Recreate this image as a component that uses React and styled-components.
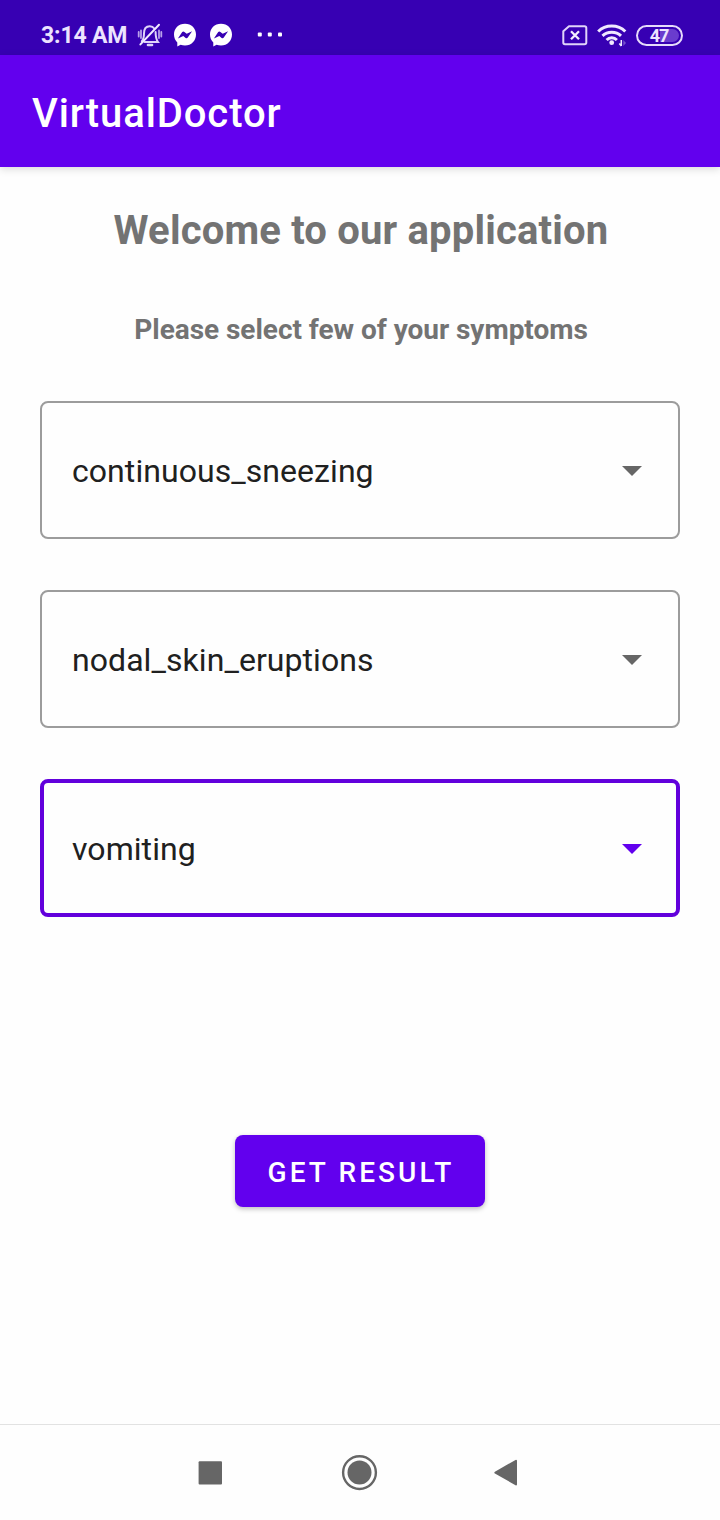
import React from "react";
import styled, { createGlobalStyle } from "styled-components";

const GlobalStyle = createGlobalStyle`
  * { box-sizing: border-box; }
  body { margin: 0; background: #fff; font-family: Roboto, sans-serif; }
`;

const Screen = styled.div`
  width: 720px;
  height: 1520px;
  display: flex;
  flex-direction: column;
  background: #fefefe;
  overflow: hidden;
`;

const StatusBar = styled.header`
  height: 55px;
  flex: none;
  padding: 15px 37px 0 41px;
  display: flex;
  justify-content: space-between;
  align-items: flex-start;
  background: #3700b3;
  color: #ece3ff;
`;

const StatusGroup = styled.div`
  height: 40px;
  display: flex;
  align-items: center;
`;

const Clock = styled.span`
  width: 96px;
  padding-top: 2px;
  font-size: 23px;
  font-weight: 700;
  line-height: 40px;
  letter-spacing: -0.15px;
  white-space: nowrap;
`;

const Glyph = styled.svg`
  display: block;
  flex: none;
  margin-right: ${(p) => p.$gap || 0}px;
`;

const Battery = styled.div`
  width: 47px;
  height: 21px;
  padding: 2px;
  border: 2px solid #e6dbfb;
  border-radius: 11px;
  display: grid;
  align-items: center;
`;

const BatteryFill = styled.span`
  grid-area: 1 / 1;
  justify-self: end;
  width: 19px;
  height: 13px;
  border-radius: 0 7px 7px 0;
  background: #6a3cce;
`;

const BatteryLevel = styled.span`
  grid-area: 1 / 1;
  justify-self: center;
  padding-right: 1px;
  font-size: 18px;
  font-weight: 700;
  line-height: 13px;
  letter-spacing: -1px;
`;

const AppBar = styled.div`
  height: 112px;
  flex: none;
  padding: 6px 32px 0;
  display: flex;
  align-items: center;
  background: #6200ee;
  box-shadow: 0 2px 8px rgba(0, 0, 0, 0.15);
`;

const AppTitle = styled.h1`
  margin: 0;
  color: #fff;
  font-size: 40px;
  font-weight: 500;
  line-height: 48px;
  letter-spacing: 0.9px;
`;

const Content = styled.main`
  flex: 1;
  padding: 40px 40px 0;
  display: flex;
  flex-direction: column;
  align-items: center;
`;

const Heading = styled.h2`
  margin: 0;
  padding-left: 2px;
  color: #737373;
  font-size: 40px;
  font-weight: 700;
  line-height: 47px;
  letter-spacing: 0.18px;
`;

const Prompt = styled.p`
  margin: 59px 0 0;
  padding-left: 2px;
  color: #737373;
  font-size: 28px;
  font-weight: 700;
  line-height: 33px;
  letter-spacing: -0.04px;
`;

const Fields = styled.div`
  width: 100%;
  margin-top: 55px;
  display: flex;
  flex-direction: column;
  gap: 51px;
`;

const Field = styled.div`
  height: 138px;
  padding: 2px ${(p) => (p.$active ? 34 : 36)}px 0 ${(p) => (p.$active ? 28 : 30)}px;
  display: flex;
  align-items: center;
  justify-content: space-between;
  border: ${(p) => (p.$active ? "4px solid #6200dc" : "2px solid #9c9c9c")};
  border-radius: 8px;
  color: ${(p) => (p.$active ? "#6200ee" : "#666")};
`;

const FieldText = styled.span`
  color: #202020;
  font-size: 32px;
  line-height: 38px;
  letter-spacing: 0.06px;
`;

const Submit = styled.button`
  width: 250px;
  height: 72px;
  margin: 218px 0 0;
  padding: 3px 0 0 2px;
  border: 0;
  border-radius: 8px;
  background: #6200ee;
  box-shadow: 0 2px 5px rgba(0, 0, 0, 0.25);
  color: #fff;
  font-family: inherit;
  font-size: 28px;
  font-weight: 500;
  line-height: 33px;
  letter-spacing: 3.1px;
  white-space: nowrap;
`;

const NavBar = styled.nav`
  height: 96px;
  flex: none;
  padding-left: 198px;
  display: flex;
  align-items: center;
  border-top: 1px solid #e2e2e2;
  background: #fefefe;
`;

function MutedBell() {
  return (
    <Glyph width="26" height="26" viewBox="0 0 26 26" $gap={10} fill="none" stroke="#dfd3f9" strokeWidth="2" strokeLinecap="round">
      <path d="M4.8 19.2C7 17 7 15 7 11.5C7 7 9.2 4.2 12.8 4.2C14.8 4.2 16.3 5 17.3 6.5" />
      <path d="M18.6 10C18.6 15 18.8 17 21 20H7.5" />
      <path d="M11 23H15" strokeWidth="2.6" />
      <path d="M22 2.8L3.4 22.4" stroke="#f0e9ff" />
      <path d="M1.7 10V14.5M4 8.5V16M22 8.5V16M24.3 10V14.5" strokeWidth="1.8" stroke="#b9a2ea" />
    </Glyph>
  );
}

function Messenger({ gap }) {
  return (
    <Glyph width="24" height="24" viewBox="0 0 24 24" $gap={gap}>
      <path fill="#fff" d="M12 0.8C5.5 0.8 1 5.5 1 11.6C1 14.9 2.2 17.6 4.3 19.6V23.5L7.6 21.8C9 22.3 10.4 22.6 12 22.6C18.5 22.6 23 17.8 23 11.6C23 5.5 18.5 0.8 12 0.8Z" />
      <path fill="#3700b3" d="M4.9 15.4L9.2 9Q10.3 8 11.4 8.9L13.7 10.7L19.1 8.3L14.8 14.6Q13.8 15.9 12.6 14.9L10.3 13.1Z" />
    </Glyph>
  );
}

function MoreDots() {
  return (
    <Glyph width="28" height="6" viewBox="0 0 28 6" fill="#fff">
      <rect x="1.8" y="0.5" width="4" height="4" rx="1" />
      <rect x="11.8" y="0.5" width="4" height="4" rx="1" />
      <rect x="22" y="0.5" width="4" height="4" rx="1" />
    </Glyph>
  );
}

function NoSim() {
  return (
    <Glyph width="26" height="21" viewBox="0 0 26 21" $gap={9} fill="none" stroke="#e0d4fa" strokeWidth="2">
      <path d="M7 1.3H22.5Q24.3 1.3 24.3 3V17.5Q24.3 19.3 22.5 19.3H3Q1.3 19.3 1.3 17.5V6.3Z" strokeLinejoin="round" />
      <path d="M9 6.2L17 14.2M17 6.2L9 14.2" stroke="#f2ecff" strokeWidth="2.3" />
    </Glyph>
  );
}

function Wifi() {
  return (
    <Glyph width="30" height="24" viewBox="0 0 30 24" $gap={9} fill="none" stroke="#f0e9ff" strokeWidth="3">
      <path d="M1.2 8.5C8.5 1.2 21 1.2 28.3 8.5" />
      <path d="M5.5 12.8C10.5 8 19 8 24 12.8" />
      <path d="M9.6 17C12.5 14 17 14 19.9 17" />
      <circle cx="14.7" cy="19.7" r="2.4" fill="#f0e9ff" stroke="none" />
      <path d="M24.3 17V23M22.3 20.5L24.3 23" strokeWidth="1.5" />
      <path d="M26.3 23V17L29 20Z" fill="#7550cc" stroke="none" />
    </Glyph>
  );
}

function Caret() {
  return (
    <Glyph width="20" height="10" viewBox="0 0 20 10">
      <path d="M0 0H20L10 10Z" fill="currentColor" />
    </Glyph>
  );
}

const symptoms = [
  { name: "continuous_sneezing" },
  { name: "nodal_skin_eruptions" },
  { name: "vomiting", active: true },
];

export default function App() {
  return (
    <>
      <GlobalStyle />
      <Screen>
        <StatusBar>
          <StatusGroup>
            <Clock>3:14 AM</Clock>
            <MutedBell />
            <Messenger gap={12} />
            <Messenger gap={23} />
            <MoreDots />
          </StatusGroup>
          <StatusGroup>
            <NoSim />
            <Wifi />
            <Battery>
              <BatteryFill />
              <BatteryLevel>47</BatteryLevel>
            </Battery>
          </StatusGroup>
        </StatusBar>
        <AppBar>
          <AppTitle>VirtualDoctor</AppTitle>
        </AppBar>
        <Content>
          <Heading>Welcome to our application</Heading>
          <Prompt>Please select few of your symptoms</Prompt>
          <Fields>
            {symptoms.map((s) => (
              <Field key={s.name} $active={s.active}>
                <FieldText>{s.name}</FieldText>
                <Caret />
              </Field>
            ))}
          </Fields>
          <Submit type="button">GET RESULT</Submit>
        </Content>
        <NavBar>
          <Glyph width="24" height="24" viewBox="0 0 24 24" $gap={119}>
            <rect x="0.6" y="0.2" width="23.4" height="23.4" rx="1" fill="#666" />
          </Glyph>
          <Glyph width="37" height="36" viewBox="0 0 37 36" $gap={115}>
            <circle cx="18.5" cy="17.6" r="16.4" fill="none" stroke="#666" strokeWidth="2.4" />
            <circle cx="18.5" cy="17.6" r="12" fill="#666" />
          </Glyph>
          <Glyph width="25" height="28" viewBox="0 0 25 28">
            <path d="M23 1.8V25.4L2.4 13.6Z" fill="#666" stroke="#666" strokeWidth="2" strokeLinejoin="round" />
          </Glyph>
        </NavBar>
      </Screen>
    </>
  );
}
